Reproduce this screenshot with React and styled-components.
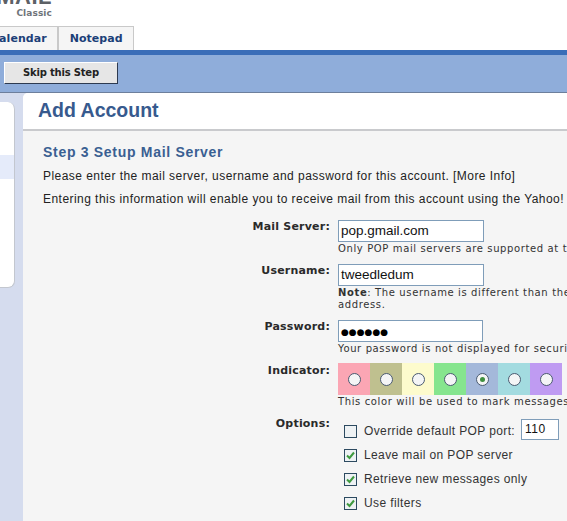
import React from "react";
import styled, { createGlobalStyle } from "styled-components";

const Global = createGlobalStyle`
  html, body { margin: 0; padding: 0; background: #fff; overflow: hidden; }
  body { font-family: "Liberation Sans", Arial, sans-serif; }
`;
const Page = styled.div`
  width: 567px; height: 521px; overflow: hidden; display: flex; flex-direction: column; background: #d5dcee;
`;
const Header = styled.header`
  height: 50px; background: #fff; display: flex; flex-direction: column; flex: none; overflow: hidden;
`;
const Logo = styled.div`
  height: 26px; width: 52px; display: flex; flex-direction: column; align-items: flex-end; overflow: hidden; flex: none;
`;
const LogoWord = styled.div`
  font: bold 22px/22px "Liberation Sans", sans-serif; color: #5d6166; margin-top: -14px; height: 22px; letter-spacing: 0.5px; white-space: nowrap;
`;
const LogoSub = styled.div`
  font: bold 9px/11px "DejaVu Sans", sans-serif; color: #6f747a; letter-spacing: 0.1px;
`;
const Tabs = styled.nav`
  display: flex; height: 24px; margin-left: -20.5px;
`;
const Tab = styled.div`
  font: bold 11px/24px "DejaVu Sans", sans-serif; color: #1c3f78; background: #f5f5f5; border: 1px solid #c9c9c9; border-bottom: 0; padding: 0 10.5px; letter-spacing: 0.05px; white-space: nowrap;
`;
const Toolbar = styled.div`
  flex: none; height: 43px; box-sizing: border-box; background: #8fadda; border-top: 5px solid #3a6db8; border-bottom: 1px solid #6d7f9c; padding: 7px 4px 0; display: flex; align-items: flex-start;
`;
const SkipButton = styled.button`
  width: 114px; height: 22px; padding: 0; box-sizing: border-box; background: #e6e6e6; color: #222;
  border: 1px solid; border-color: #fff #2d3a50 #2d3a50 #fff; outline: 0; font: bold 10px/20px "DejaVu Sans", sans-serif; letter-spacing: -0.2px;
`;
const Body = styled.div`
  flex: 1; display: flex; min-height: 0;
`;
const Rail = styled.aside`
  width: 23px; flex: none; padding-top: 9px; box-sizing: border-box;
`;
const SidePanel = styled.div`
  width: 15px; height: 186px; background: #fff; border-radius: 0 7px 7px 0; border-right: 1px solid #c3c7cf; border-bottom: 1px solid #c3c7cf; box-sizing: border-box; padding-top: 53px;
`;
const SideSelected = styled.div`
  height: 24px; background: #e5ebfa;
`;
const Main = styled.main`
  flex: 1; min-width: 0; background: #f5f5f5; overflow: hidden; display: flex; flex-direction: column; border-top-left-radius: 5px;
`;
const TitleBar = styled.div`
  height: 36px; flex: none; background: #fff; border-bottom: 2px solid #c9cacd; padding-left: 15px;
`;
const Title = styled.h1`
  margin: 0; font: bold 19.5px/34px "Liberation Sans", sans-serif; color: #375a8e;
`;
const Content = styled.div`
  padding: 12px 0 0 20px; width: 560px;
`;
const StepTitle = styled.h2`
  margin: 0 0 3px; font: bold 14px/18px "Liberation Sans", sans-serif; color: #3a5f92; letter-spacing: 0.7px;
`;
const Para = styled.p`
  margin: 0; font: 12px/24px "Liberation Sans", sans-serif; color: #222; letter-spacing: 0.455px; white-space: nowrap;
`;
const IntroLast = styled(Para)`
  margin-top: -1px; margin-bottom: 1px;
`;
const Form = styled.div`
  display: grid; grid-template-columns: 295px 1fr; width: 560px;
`;
const Label = styled.div`
  font: bold 11px/16px "DejaVu Sans", sans-serif; color: #2a2a2a; text-align: right; padding-right: 8px; padding-top: ${p => p.$top}px; white-space: nowrap; letter-spacing: 0.2px;
`;
const Field = styled.div`
  padding-top: ${p => p.$top}px; height: ${p => p.$h}px; box-sizing: border-box; white-space: nowrap;
`;
const TextBox = styled.div`
  width: ${p => p.$w}px; height: 22px; box-sizing: border-box; background: #fff; border: 1px solid #7f9db9; font: 13.5px/20px "Liberation Sans", sans-serif; color: #111; padding-left: 2px;
`;
const Hint = styled.div`
  font: 10px/12px "DejaVu Sans", sans-serif; color: #333; margin-top: 1px; letter-spacing: 0.62px; white-space: ${p => p.$wrap ? "normal" : "nowrap"}; width: ${p => p.$wrap ? "300px" : "auto"};
`;
const Dots = styled.span`
  font: 9px/20px "DejaVu Sans", sans-serif; color: #000;
`;
const Swatches = styled.div`
  display: flex; height: 32px; width: 224px;
`;
const Swatch = styled.div`
  width: 32px; flex: none; background: ${p => p.$c}; display: flex; align-items: center; justify-content: center;
`;
const Radio = styled.span`
  width: 13px; height: 13px; box-sizing: border-box; border-radius: 50%; background: #f4f5f6; border: 1px solid #4a5a70; display: flex; align-items: center; justify-content: center;
`;
const RadioDot = styled.span`
  width: 5px; height: 5px; border-radius: 50%; background: #3f8f3f;
`;
const Option = styled.div`
  display: flex; align-items: center; height: 24px; padding-left: 6px; font: 12px/16px "Liberation Sans", sans-serif; color: #333; letter-spacing: 0.38px;
`;
const Check = styled.span`
  width: 13px; height: 13px; box-sizing: border-box; border: 1px solid #2c4a60; background: #eef2f4; margin-right: 7px; flex: none; display: flex; align-items: center; justify-content: center;
`;
const Port = styled.div`
  width: 38px; height: 21px; margin: 0 0 3px 6px; box-sizing: border-box; background: #fff; border: 1px solid #7f9db9; font: 12px/19px "Liberation Sans", sans-serif; letter-spacing: 0.5px; color: #111; padding-left: 3px;
`;

const Tick = () => (
  <svg width="9" height="9" viewBox="0 0 9 9"><path d="M1 4.5 L3.5 7 L8 1.5" fill="none" stroke="#3f9a3f" strokeWidth="2" /></svg>
);

const colors = ["#fba6b4", "#bfc08f", "#fdfbcd", "#86e58e", "#a4b8da", "#a3dbe0", "#bf9bf2"];

export default function App() {
  return (
    <Page>
      <Global />
      <Header>
        <Logo><LogoWord>MAIL</LogoWord><LogoSub>Classic</LogoSub></Logo>
        <Tabs><Tab>Calendar</Tab><Tab>Notepad</Tab></Tabs>
      </Header>
      <Toolbar><SkipButton>Skip this Step</SkipButton></Toolbar>
      <Body>
        <Rail><SidePanel><SideSelected /></SidePanel></Rail>
        <Main>
          <TitleBar><Title>Add Account</Title></TitleBar>
          <Content>
            <StepTitle>Step 3 Setup Mail Server</StepTitle>
            <Para>Please enter the mail server, username and password for this account. [More Info]</Para>
            <IntroLast>Entering this information will enable you to receive mail from this account using the Yahoo! Mail interface.</IntroLast>
            <Form>
              <Label $top={7}>Mail Server:</Label>
              <Field $top={8} $h={44}><TextBox $w={146}>pop.gmail.com</TextBox><Hint>Only POP mail servers are supported at this time.</Hint></Field>
              <Label $top={7}>Username:</Label>
              <Field $top={8} $h={56}><TextBox $w={146}>tweedledum</TextBox><Hint $wrap><b>Note</b>: The username is different than the email address.</Hint></Field>
              <Label $top={7}>Password:</Label>
              <Field $top={8} $h={43}><TextBox $w={145}><Dots>●●●●●●</Dots></TextBox><Hint>Your password is not displayed for security.</Hint></Field>
              <Label $top={8}>Indicator:</Label>
              <Field $top={8} $h={60}>
                <Swatches>
                  {colors.map((c, i) => <Swatch key={c} $c={c}><Radio>{i === 4 && <RadioDot />}</Radio></Swatch>)}
                </Swatches>
                <Hint>This color will be used to mark messages from this account.</Hint>
              </Field>
              <Label $top={1}>Options:</Label>
              <Field $top={4} $h={100}>
                <Option><Check />Override default POP port:<Port>110</Port></Option>
                <Option><Check><Tick /></Check>Leave mail on POP server</Option>
                <Option><Check><Tick /></Check>Retrieve new messages only</Option>
                <Option><Check><Tick /></Check>Use filters</Option>
              </Field>
            </Form>
          </Content>
        </Main>
      </Body>
    </Page>
  );
}
